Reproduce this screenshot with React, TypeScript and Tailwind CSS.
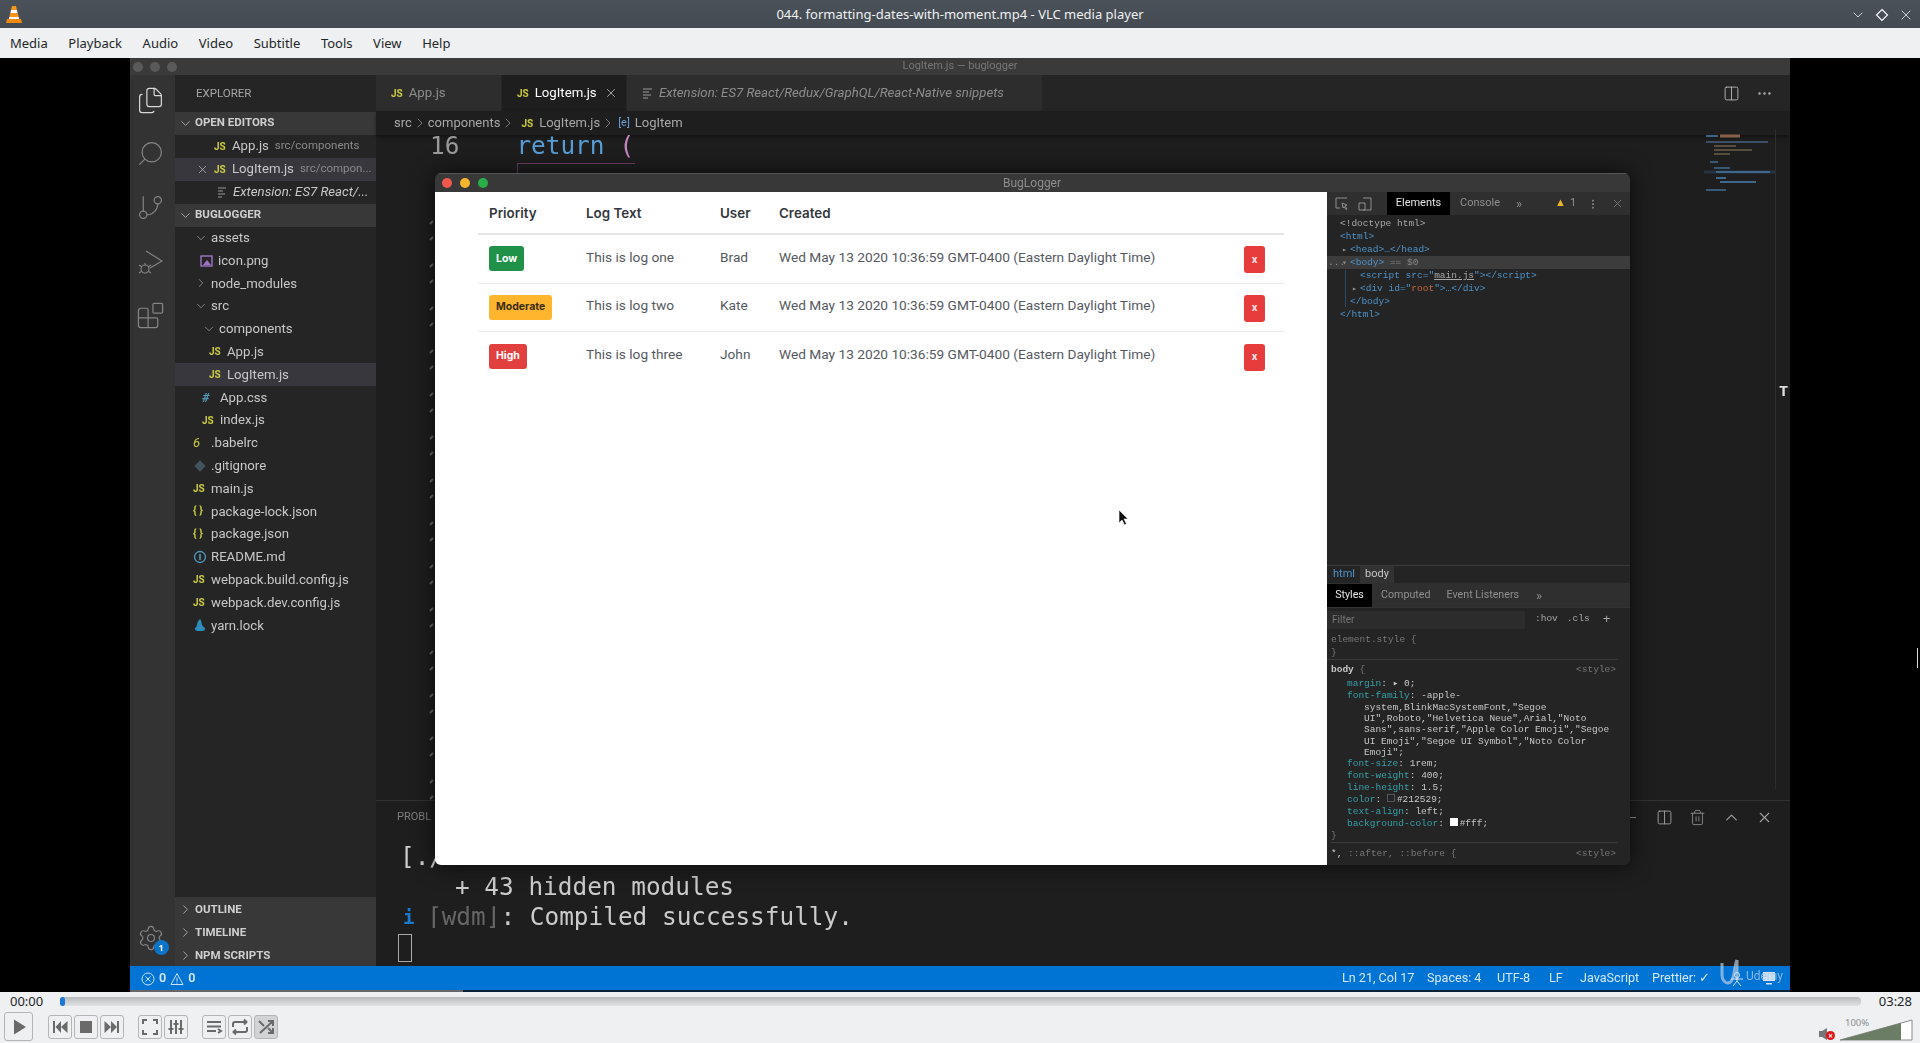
import React from 'react';
import { Blocks, ChevronDown, ChevronRight, ChevronUp, Columns2, Files, GitBranch, MoreHorizontal, Search, Settings, Trash2, X } from 'lucide-react';

const uiFont = "font-['Noto_Sans',sans-serif]";
const videoFont = "font-['Roboto',sans-serif]";
const headFont = "font-['Inter',sans-serif]";
const monoFont = "font-['DejaVu_Sans_Mono',monospace]";
const devMono = "font-['Liberation_Mono',monospace]";

type FileIcon = 'js' | 'css' | 'png' | 'babel' | 'git' | 'json' | 'info' | 'yarn' | 'folder-open' | 'folder';

interface TreeRow {
  name: string;
  icon: FileIcon;
  pad: string;
  selected?: boolean;
}

const treeRows: TreeRow[] = [
  { name: 'assets', icon: 'folder-open', pad: 'pl-[18px]' },
  { name: 'icon.png', icon: 'png', pad: 'pl-[25px]' },
  { name: 'node_modules', icon: 'folder', pad: 'pl-[18px]' },
  { name: 'src', icon: 'folder-open', pad: 'pl-[18px]' },
  { name: 'components', icon: 'folder-open', pad: 'pl-[26px]' },
  { name: 'App.js', icon: 'js', pad: 'pl-[34px]' },
  { name: 'LogItem.js', icon: 'js', pad: 'pl-[34px]', selected: true },
  { name: 'App.css', icon: 'css', pad: 'pl-[27px]' },
  { name: 'index.js', icon: 'js', pad: 'pl-[27px]' },
  { name: '.babelrc', icon: 'babel', pad: 'pl-[18px]' },
  { name: '.gitignore', icon: 'git', pad: 'pl-[18px]' },
  { name: 'main.js', icon: 'js', pad: 'pl-[18px]' },
  { name: 'package-lock.json', icon: 'json', pad: 'pl-[18px]' },
  { name: 'package.json', icon: 'json', pad: 'pl-[18px]' },
  { name: 'README.md', icon: 'info', pad: 'pl-[18px]' },
  { name: 'webpack.build.config.js', icon: 'js', pad: 'pl-[18px]' },
  { name: 'webpack.dev.config.js', icon: 'js', pad: 'pl-[18px]' },
  { name: 'yarn.lock', icon: 'yarn', pad: 'pl-[18px]' },
];

const logs = [
  { priority: 'Low', cls: 'bg-[#1f9148] text-white', text: 'This is log one', user: 'Brad' },
  { priority: 'Moderate', cls: 'bg-[#ffb52e] text-[#3a2c08]', text: 'This is log two', user: 'Kate' },
  { priority: 'High', cls: 'bg-[#e23f3f] text-white', text: 'This is log three', user: 'John' },
];

const JsMark = () => <span className="w-[18px] shrink-0 text-[10px] font-bold text-[#cbcb41]">JS</span>;

const RowIcon = ({ icon }: { icon: FileIcon }) => {
  if (icon === 'js') return <JsMark />;
  if (icon === 'css') return <span className="w-[18px] shrink-0 text-[13px] font-bold italic text-[#519aba]">#</span>;
  if (icon === 'json') return <span className="w-[18px] shrink-0 text-[11px] font-bold text-[#cbcb41]">{'{ }'}</span>;
  if (icon === 'babel') return <span className="w-[18px] shrink-0 text-[13px] italic text-[#cbcb41]">6</span>;
  if (icon === 'folder-open') return <ChevronDown className="mr-[2px] w-[16px] shrink-0 text-[#aaa]" size={14} strokeWidth={1.2} />;
  if (icon === 'folder') return <ChevronRight className="mr-[2px] w-[16px] shrink-0 text-[#aaa]" size={14} strokeWidth={1.2} />;
  return (
    <svg className="mr-[4px] shrink-0" width="14" height="14" viewBox="0 0 14 14">
      {icon === 'git' && <rect x="3" y="3" width="8" height="8" transform="rotate(45 7 7)" fill="#41535b" />}
      {icon === 'info' && (
        <>
          <circle cx="7" cy="7" r="5.5" fill="none" stroke="#519aba" strokeWidth="1.3" />
          <path d="M7 4v6" stroke="#519aba" strokeWidth="1.6" />
        </>
      )}
      {icon === 'yarn' && <path d="M7 1c2 2 1 4 2 6s3 2 3 4-3 2-5 2-5 0-5-2 2-2 2-4 1-4 3-6z" fill="#2c8ebb" />}
      {icon === 'png' && (
        <>
          <rect x="1" y="2" width="11" height="10" fill="none" stroke="#a074c4" strokeWidth="1.4" />
          <path d="M3 11l4-5 4 5z" fill="#a074c4" />
        </>
      )}
    </svg>
  );
};

const SectionHeader = ({ title, open = true }: { title: string; open?: boolean }) => (
  <div className={`flex h-[23px] items-center bg-[#383838] pl-[3px] text-[11.5px] font-bold text-[#cfcfcf] ${open ? '' : 'pt-[2px]'}`}>
    {open ? <ChevronDown size={15} strokeWidth={1.3} className="mr-[2px] text-[#bbb]" /> : <ChevronRight size={15} strokeWidth={1.3} className="mr-[2px] text-[#bbb]" />}
    {title}
  </div>
);

const Sidebar = () => (
  <aside className={`flex w-[201px] shrink-0 flex-col bg-[#252526] text-[13.2px] text-[#c8c8c8] ${videoFont}`}>
    <div className="flex h-[36.5px] items-center pl-[21px] text-[11.5px] text-[#a5a5a5]">EXPLORER</div>
    <SectionHeader title="OPEN EDITORS" />
    <div className="flex h-[23px] items-center pl-[39px]">
      <JsMark />
      <span>App.js</span>
      <span className="ml-[6px] text-[11.5px] text-[#8a8a8a]">src/components</span>
    </div>
    <div className="flex h-[23px] items-center bg-[#37373d] pl-[21px]">
      <X size={13} strokeWidth={1.3} className="mr-[5px] text-[#c5c5c5]" />
      <JsMark />
      <span>LogItem.js</span>
      <span className="ml-[6px] whitespace-nowrap text-[11.5px] text-[#8a8a8a]">src/compon...</span>
    </div>
    <div className="flex h-[23px] items-center pl-[42px]">
      <svg className="mr-[6px] shrink-0" width="10" height="12" viewBox="0 0 10 12" stroke="#9a9a9a" strokeWidth="1.2">
        <path d="M1 2h8M1 5h5M1 8h7M1 11h4" />
      </svg>
      <span className="whitespace-nowrap italic">Extension: ES7 React/...</span>
    </div>
    <SectionHeader title="BUGLOGGER" />
    {treeRows.map((row) => (
      <div key={row.name} className={`flex h-[22.8px] items-center ${row.pad} ${row.selected ? 'bg-[#37373d]' : ''}`}>
        <RowIcon icon={row.icon} />
        <span>{row.name}</span>
      </div>
    ))}
    <div className="flex-1" />
    <SectionHeader title="OUTLINE" open={false} />
    <SectionHeader title="TIMELINE" open={false} />
    <SectionHeader title="NPM SCRIPTS" open={false} />
  </aside>
);

const ActivityBar = () => (
  <nav className="flex w-[45px] shrink-0 flex-col items-center bg-[#333333] pt-[11px] pr-[4px] text-[#858585]">
    <Files size={29} strokeWidth={1} className="mb-[24px] text-[#d8d8d8]" />
    <Search size={29} strokeWidth={1} className="mb-[25px] scale-x-[-1]" />
    <GitBranch size={29} strokeWidth={1} className="mb-[25px]" />
    <svg className="mb-[24px]" width="30" height="30" viewBox="0 0 30 30" fill="none" stroke="currentColor" strokeWidth="1.1">
      <path d="M10 4l16 10-12 7" />
      <circle cx="9" cy="22" r="4" />
      <path d="M3 18l3 2M3 26l3-2M15 18l-3 2M15 26l-3-2M9 16v2" />
    </svg>
    <Blocks size={29} strokeWidth={1} />
    <div className="flex-1" />
    <div className="relative mb-[14px]">
      <Settings size={28} strokeWidth={1} />
      <span className="absolute right-[-4px] bottom-[-3px] flex h-[15px] w-[15px] items-center justify-center rounded-full bg-[#0a74c8] text-[9px] font-bold text-white">1</span>
    </div>
  </nav>
);

const Tab = ({ label, width, active, italic }: { label: string; width: string; active?: boolean; italic?: boolean }) => (
  <div className={`mr-[1px] flex h-full items-center pl-[15px] ${width} ${active ? 'bg-[#1e1e1e] text-white' : 'bg-[#2d2d2d] text-[#8d8d8d]'}`}>
    {italic ? (
      <svg className="mr-[6px]" width="11" height="12" viewBox="0 0 11 12" stroke="#9a9a9a" strokeWidth="1.2">
        <path d="M1 2h9M1 5h6M1 8h8M1 11h5" />
      </svg>
    ) : (
      <span className="mr-[6px] text-[10px] font-bold text-[#cbcb41]">JS</span>
    )}
    <span className={italic ? 'italic' : ''}>{label}</span>
    {active && <X size={14} strokeWidth={1.3} className="ml-[7px] text-[#ccc]" />}
  </div>
);

const Editor = () => (
  <main className="flex min-w-0 flex-1 flex-col bg-[#1e1e1e]">
    <div className={`flex h-[36px] shrink-0 items-center bg-[#252526] text-[13.2px] ${videoFont}`}>
      <Tab label="App.js" width="w-[125px]" />
      <Tab label="LogItem.js" width="w-[124px]" active />
      <Tab label="Extension: ES7 React/Redux/GraphQL/React-Native snippets" width="w-[415px]" italic />
      <div className="flex-1" />
      <Columns2 size={17} strokeWidth={1.3} className="mr-[16px] text-[#b5b5b5]" />
      <MoreHorizontal size={17} strokeWidth={1.5} className="mr-[17px] text-[#b5b5b5]" />
    </div>
    <div className={`flex h-[24px] shrink-0 items-center pl-[18px] text-[13px] text-[#a8a8a8] shadow-[0_2px_4px_rgba(0,0,0,0.4)] ${videoFont}`}>
      <span>src</span>
      <ChevronRight size={16} strokeWidth={1} />
      <span>components</span>
      <ChevronRight size={16} strokeWidth={1} />
      <span className="mr-[6px] ml-[5px] text-[10px] font-bold text-[#cbcb41]">JS</span>
      <span>LogItem.js</span>
      <ChevronRight size={16} strokeWidth={1} />
      <span className="mx-[2px] text-[11px] text-[#6aa0d8]">[e]</span>
      <span className="ml-[3px]">LogItem</span>
    </div>
    <div className="relative min-h-0 flex-1">
      <div className={`-mt-[4px] flex h-[30px] items-center text-[24.4px] ${monoFont}`}>
        <span className="ml-[54px] text-[#9a9a9a]">16</span>
        <span className="ml-[57px] text-[#569cd6]">return</span>
        <span className="ml-[15px] text-[#c586c0]">(</span>
      </div>
      <div className="absolute top-[28px] left-[141px] h-[10px] w-[118px] border-t border-l border-[#6a3f66]" />
      <svg className="absolute top-[-5px] right-[14px] opacity-75" width="72" height="66" viewBox="0 0 72 66">
        <g strokeWidth="2" fill="none">
          <path d="M2 6h12" stroke="#4a7fb0" />
          <path d="M16 6h20" stroke="#b0785a" strokeWidth="3" />
          <path d="M2 12h62" stroke="#44607e" />
          <path d="M10 16h22M10 20h38M10 24h16" stroke="#6b6048" />
          <path d="M6 32h8M10 38h16" stroke="#3e6d96" />
          <path d="M0 42h72" stroke="#2a3a4e" strokeWidth="3" />
          <path d="M12 42h54M12 48h10M16 52h36" stroke="#4a7fb0" />
          <path d="M2 60h20" stroke="#3e6d96" />
        </g>
      </svg>
      <div className="absolute top-[-6px] right-[14px] h-[660px] w-px bg-[#2d2d2d]" />
      <span className="absolute top-[244px] right-[2px] text-[15px] font-bold text-[#ddd]">T</span>
    </div>
    <section className="h-[166px] shrink-0 border-t border-[#333] bg-[#1e1e1e]">
      <div className="flex h-[32px] items-center pl-[21px] pr-[17px] text-[#a0a0a0]">
        <span className={`text-[11px] text-[#7f7f7f] ${videoFont}`}>PROBL</span>
        <div className="flex-1" />
        <span className="mr-[20px] h-px w-[7px] bg-[#999]" />
        <Columns2 size={17} strokeWidth={1.3} className="mr-[16px]" />
        <Trash2 size={17} strokeWidth={1.3} className="mr-[16px] text-[#888]" />
        <ChevronUp size={19} strokeWidth={1.5} className="mr-[15px]" />
        <X size={17} strokeWidth={1.5} />
      </div>
      <div className={`relative pt-[9px] pl-[24px] text-[24.4px] leading-[30px] text-[#ccc] ${monoFont}`}>
        <div>[./</div>
        <div className="pl-[55px]">+ 43 hidden modules</div>
        <div className="flex items-center">
          <span className="w-[27px] pl-[3px] text-[19px] font-bold text-[#1a7ad0]">i</span>
          <span className="text-[#666]">⌈wdm⌋</span>
          <span>: Compiled successfully.</span>
        </div>
      </div>
      <div className="mt-[2px] ml-[22px] h-[28px] w-[14px] border border-[#aaa]" />
    </section>
  </main>
);

const StatusBar = () => (
  <footer className={`relative flex h-[24px] shrink-0 items-center bg-[#0074d4] pt-[1px] pl-[11px] text-[12.6px] text-[#d4e8fa] ${videoFont}`}>
    <svg width="14" height="14" viewBox="0 0 14 14" fill="none" stroke="#cfe3f7" strokeWidth="1">
      <circle cx="7" cy="7" r="6" />
      <path d="M4.500 4.500l5 5M9.500 4.500l-5 5" />
    </svg>
    <span className="mx-[4px] font-semibold">0</span>
    <svg width="14" height="14" viewBox="0 0 14 14" fill="none" stroke="#cfe3f7" strokeWidth="1">
      <path d="M7 1.500L13 12.500H1zM7 5.500v4M7 10.500v1" />
    </svg>
    <span className="ml-[4px] font-semibold">0</span>
    <div className="flex-1" />
    <span className="w-[85px]">Ln 21, Col 17</span>
    <span className="w-[70px]">Spaces: 4</span>
    <span className="w-[52px]">UTF-8</span>
    <span className="w-[31px]">LF</span>
    <span className="w-[72px]">JavaScript</span>
    <span className="w-[138px]">Prettier: ✓</span>
    <svg className="absolute top-[-9px] right-[45px] opacity-70" width="26" height="32" viewBox="0 0 26 32" fill="none" stroke="#b9cfe6" strokeWidth="3">
      <path d="M3 6v12c0 5 3 8 6 8s5-4 6-10 2-11 3-13M18 3v20" />
    </svg>
    <svg className="absolute top-[5px] right-[46px]" width="14" height="16" viewBox="0 0 14 16" fill="none" stroke="#cfe3f7" strokeWidth="1">
      <circle cx="7" cy="4" r="2.500" />
      <path d="M1 8h12M7 7v3l-4 5M7 10l4 5" />
    </svg>
    <svg className="absolute top-[5px] right-[14px]" width="14" height="14" viewBox="0 0 14 14" fill="#cfe3f7">
      <path d="M1 1h12v9H1zM4 12h6v1.500H4z" />
    </svg>
    <span className="absolute top-[1px] right-[7px] text-[12px] text-[#a9c8e8] opacity-80">Udemy</span>
  </footer>
);

const Badge = ({ label, cls }: { label: string; cls: string }) => (
  <span className={`inline-flex h-[25px] items-center rounded-[3px] px-[7px] text-[10.5px] font-bold ${headFont} ${cls}`}>{label}</span>
);

const LogTable = () => (
  <div className={`min-w-0 flex-1 bg-white pl-[43px] pr-[43px] text-[13.7px] text-[#55595e] ${videoFont}`}>
    <div className={`flex h-[43px] items-center border-b-2 border-[#e3e6e9] pt-[2px] pl-[11px] text-[13.4px] font-semibold text-[#33373b] ${headFont}`}>
      <span className="w-[97px]">Priority</span>
      <span className="w-[134px]">Log Text</span>
      <span className="w-[59px]">User</span>
      <span>Created</span>
    </div>
    {logs.map((log) => (
      <div key={log.user} className="flex h-[48.5px] items-center border-b border-[#e8eaec] pl-[11px] last:border-b-0">
        <span className="flex w-[97px]">
          <Badge label={log.priority} cls={log.cls} />
        </span>
        <span className="w-[134px] pb-[3px]">{log.text}</span>
        <span className="w-[59px] pb-[3px]">{log.user}</span>
        <span className="w-[465px] whitespace-nowrap pb-[3px]">Wed May 13 2020 10:36:59 GMT-0400 (Eastern Daylight Time)</span>
        <span className="mt-[2px] flex h-[27px] w-[21px] items-center justify-center rounded-[3px] bg-[#e63c3c] text-[11px] font-bold text-[#fbe1e1]">x</span>
      </div>
    ))}
  </div>
);

const DomLine = ({ children, selected, pad, arrow }: { children: React.ReactNode; selected?: boolean; pad: string; arrow?: string }) => (
  <div className={`h-[13px] whitespace-nowrap leading-[13px] ${pad} ${selected ? 'bg-[#3c3c3c]' : ''}`}>
    {arrow && <span className="-ml-[8px] inline-block w-[8px] text-[8px] text-[#8f8f8f]">{arrow}</span>}
    {children}
  </div>
);

const Prop = ({ name, value }: { name: string; value: React.ReactNode }) => (
  <div className="h-[12px] whitespace-nowrap pl-[16px] leading-[12px] text-[#c8c8c8]">
    <span className="text-[#35a0a8]">{name}</span>: {value}
  </div>
);

const DevTools = () => (
  <div className={`flex w-[303px] shrink-0 flex-col bg-[#242424] text-[9.5px] text-[#bcbcbc] ${devMono}`}>
    <div className={`flex h-[23px] shrink-0 items-center bg-[#2f2f2f] text-[11px] text-[#8f8f8f] ${videoFont}`}>
      <svg className="ml-[8px]" width="13" height="13" viewBox="0 0 13 13" fill="none" stroke="#8f8f8f">
        <path d="M12 1H1v10h4M7 6l5 2-2 1 2 3-1 .6-2-3-1 1.400z" />
      </svg>
      <svg className="ml-[10px]" width="14" height="14" viewBox="0 0 14 14" fill="none" stroke="#8f8f8f">
        <path d="M5 1h8v12H5M1 6h6v7H1z" />
      </svg>
      <span className="ml-[15px] flex h-full w-[63px] items-center justify-center bg-black text-[#e4e4e4]">Elements</span>
      <span className="ml-[10px] w-[38px]">Console</span>
      <span className="ml-[18px] text-[13px]">»</span>
      <span className="ml-[33px] text-[#f0b429]">▲</span>
      <span className="ml-[4px]">1</span>
      <MoreHorizontal size={12} className="ml-[11px] rotate-90" />
      <X size={13} strokeWidth={1.3} className="ml-[12px]" />
    </div>
    <div className="relative h-[350px] shrink-0 pt-[2px] text-[#4d93c9]">
      <DomLine pad="pl-[13px]"><span className="text-[#a9a9a9]">&lt;!doctype html&gt;</span></DomLine>
      <DomLine pad="pl-[13px]">&lt;html&gt;</DomLine>
      <DomLine pad="pl-[23px]" arrow="▸">&lt;head&gt;…&lt;/head&gt;</DomLine>
      <DomLine pad="pl-[23px]" selected arrow="▾">&lt;body&gt; <span className="text-[#8a8a8a]">== $0</span></DomLine>
      <DomLine pad="pl-[33px]">&lt;script src="<span className="text-[#a9a9a9] underline">main.js</span>"&gt;&lt;/script&gt;</DomLine>
      <DomLine pad="pl-[33px]" arrow="▸">&lt;div id="<span className="text-[#c7693c]">root</span>"&gt;…&lt;/div&gt;</DomLine>
      <DomLine pad="pl-[23px]">&lt;/body&gt;</DomLine>
      <DomLine pad="pl-[13px]">&lt;/html&gt;</DomLine>
      <span className="absolute top-[41px] left-[1px] text-[#8f8f8f]">...</span>
      <span className="absolute top-[55px] left-[18px] h-[37px] w-px bg-[#264a6e]" />
    </div>
    <div className={`flex h-[18px] shrink-0 items-center border-t border-[#3a3a3a] text-[11px] ${videoFont}`}>
      <span className="ml-[6px] text-[#4d93c9]">html</span>
      <span className="ml-[5px] flex h-full items-center bg-[#323232] px-[5px] text-[#c8c8c8]">body</span>
    </div>
    <div className={`flex h-[25px] shrink-0 items-center border-b border-[#333] bg-[#2f2f2f] pt-[1px] text-[10.7px] text-[#8f8f8f] ${videoFont}`}>
      <span className="flex h-full w-[45px] items-center justify-center bg-black text-[#e4e4e4]">Styles</span>
      <span className="ml-[9px]">Computed</span>
      <span className="ml-[16px]">Event Listeners</span>
      <span className="ml-[17px] text-[13px]">»</span>
    </div>
    <div className="mr-[12px] flex h-[21px] shrink-0 items-center pt-[2px] text-[#a8a8a8]">
      <span className={`flex h-[18px] w-[198px] items-center bg-[#2c2c2c] pl-[5px] text-[10px] text-[#777] ${videoFont}`}>Filter</span>
      <span className="ml-[10px]">:hov</span>
      <span className="ml-[9px]">.cls</span>
      <span className="ml-[13px] text-[13px]">+</span>
    </div>
    <div className="mr-[12px] h-[31px] shrink-0 border-b border-[#3a3a3a] pt-[4px] pl-[4px] text-[#777] leading-[13px]">
      <div>element.style {'{'}</div>
      <div>{'}'}</div>
    </div>
    <div className="mr-[12px] flex-1 overflow-hidden pt-[3px] pl-[4px]">
      <div className="flex h-[15px] justify-between pr-[2px] leading-[13px]">
        <span className="font-bold text-[#c8c8c8]">body <span className="font-normal text-[#777]">{'{'}</span></span>
        <span className="text-[#777]">&lt;style&gt;</span>
      </div>
      <Prop name="margin" value="▸ 0;" />
      <Prop name="font-family" value="-apple-" />
      <div className="pl-[33px] leading-[11.2px] whitespace-nowrap text-[#c8c8c8]">
        <div>system,BlinkMacSystemFont,"Segoe</div>
        <div>UI",Roboto,"Helvetica Neue",Arial,"Noto</div>
        <div>Sans",sans-serif,"Apple Color Emoji","Segoe</div>
        <div>UI Emoji","Segoe UI Symbol","Noto Color</div>
        <div>Emoji";</div>
      </div>
      <Prop name="font-size" value="1rem;" />
      <Prop name="font-weight" value="400;" />
      <Prop name="line-height" value="1.5;" />
      <Prop
        name="color"
        value={
          <>
            <span className="mr-[2px] inline-block h-[8px] w-[8px] border border-[#555] bg-[#212529]" />
            #212529;
          </>
        }
      />
      <Prop name="text-align" value="left;" />
      <Prop
        name="background-color"
        value={
          <>
            <span className="mr-[2px] inline-block h-[8px] w-[8px] bg-white" />
            #fff;
          </>
        }
      />
      <div className="h-[11px] border-b border-[#3a3a3a] pb-[12px] leading-[12px] text-[#777]">{'}'}</div>
      <div className="mt-[4px] flex justify-between pr-[2px] leading-[13px] text-[#777]">
        <span><span className="text-[#c8c8c8]">*,</span> ::after, ::before {'{'}</span>
        <span>&lt;style&gt;</span>
      </div>
    </div>
  </div>
);

const AppWindow = () => (
  <div className="absolute top-[115px] left-[305px] flex h-[692px] w-[1195px] flex-col overflow-hidden rounded-[6px] shadow-[0_0_22px_rgba(0,0,0,0.7)]">
    <div className={`relative flex h-[19px] shrink-0 items-center gap-[8px] border-t border-[#555] bg-[#383838] pl-[7px] ${videoFont}`}>
      <span className="h-[10px] w-[10px] rounded-full bg-[#f0584c]" />
      <span className="h-[10px] w-[10px] rounded-full bg-[#f6b52f]" />
      <span className="h-[10px] w-[10px] rounded-full bg-[#28ae48]" />
      <span className="absolute left-[568px] text-[12px] text-[#8d8d8d]">BugLogger</span>
    </div>
    <div className="flex min-h-0 flex-1">
      <LogTable />
      <DevTools />
    </div>
  </div>
);

const IndentDots = () => (
  <svg className="absolute top-[160px] left-[298px]" width="7" height="600" viewBox="0 0 7 600" stroke="#6a6a6a" strokeWidth="2">
    {Array.from({ length: 14 }, (_, i) => (
      <path key={i} d={`M2 ${i * 43 + 6}l3-3M2 ${i * 43 + 22}l3-3`} />
    ))}
  </svg>
);

const VideoFrame = () => (
  <div className="flex h-[934px] w-[1660px] flex-col overflow-hidden blur-[0.7px]">
    <div className={`relative flex h-[17px] shrink-0 items-center justify-center bg-[#3a3a3a] text-[11px] text-[#777] ${videoFont}`}>
      <div className="absolute left-[3px] flex gap-[7px]">
        <span className="h-[10px] w-[10px] rounded-full bg-[#5a5a5a]" />
        <span className="h-[10px] w-[10px] rounded-full bg-[#5a5a5a]" />
        <span className="h-[10px] w-[10px] rounded-full bg-[#5a5a5a]" />
      </div>
      LogItem.js — buglogger
    </div>
    <div className="relative flex min-h-0 flex-1">
      <ActivityBar />
      <Sidebar />
      <Editor />
    </div>
    <StatusBar />
    <div className="flex h-[2px] shrink-0">
      <div className="w-[333px] bg-[#666]" />
      <div className="flex-1 bg-[#0a2238]" />
    </div>
  </div>
);

const Btn = ({ children, active, cls }: { children: React.ReactNode; active?: boolean; cls?: string }) => (
  <div className={`flex h-[24px] w-[24px] items-center justify-center rounded-[3px] border border-[#b4b5b6] ${active ? 'bg-[#d2d3d4]' : ''} ${cls ?? ''}`}>
    {children}
  </div>
);

const Ctl = ({ d, filled }: { d: string; filled?: boolean }) => (
  <svg width="18" height="18" viewBox="0 0 18 18" fill={filled ? '#6a6a6a' : 'none'} stroke={filled ? 'none' : '#6a6a6a'} strokeWidth="2">
    <path d={d} />
  </svg>
);

const Controls = () => (
  <div className={`flex h-[51px] shrink-0 flex-col bg-[#eff0f1] ${uiFont}`}>
    <div className="flex h-[19px] items-center text-[13px] text-[#232629]">
      <span className="ml-[10px] w-[50px]">00:00</span>
      <div className="h-[9px] flex-1 rounded-[4px] bg-gradient-to-b from-[#b9babb] to-[#e2e3e4]">
        <div className="h-[9px] w-[5px] rounded-[3px] bg-[#1e78d8]" />
      </div>
      <span className="ml-[18px] mr-[8px]">03:28</span>
    </div>
    <div className="flex flex-1 items-center pb-[1px]">
      <div className="ml-[4px] flex h-[29px] w-[29px] items-center justify-center rounded-[3px] border border-[#b4b5b6]">
        <Ctl filled d="M4 1.500L16 9 4 16.500z" />
      </div>
      <div className="ml-[15px] flex gap-[2px]">
        <Btn><Ctl filled d="M2 3h2v12H2zM10 3v12L4.500 9zM16.500 3v12L10 9z" /></Btn>
        <Btn><Ctl filled d="M3 3h12v12H3z" /></Btn>
        <Btn><Ctl filled d="M14 3h2v12h-2zM8 3v12l6-6zM1.500 3v12L8 9z" /></Btn>
      </div>
      <div className="ml-[14px] flex gap-[2px]">
        <Btn><Ctl d="M2 6V2h4M12 2h4v4M16 12v4h-4M6 16H2v-4" /></Btn>
        <Btn><Ctl d="M4 2v14M9 2v14M14 2v14M1.500 11h5M6.500 6h5M11.500 11h5" /></Btn>
      </div>
      <div className="ml-[14px] flex gap-[2px]">
        <Btn><Ctl d="M2 4h14M2 8.500h14M2 13h9M13 11l3 2-3 2" /></Btn>
        <Btn><Ctl d="M2 9V6a2 2 0 0 1 2-2h11M13 1.500L15.500 4 13 6.500M16 9v3a2 2 0 0 1-2 2H3M5 11.500L2.500 14 5 16.500" /></Btn>
        <Btn active><Ctl d="M2 3l5 5M11 3h5v5M16 3L3 15M11 15h5v-5M16 15l-5-5" /></Btn>
      </div>
      <div className="flex-1" />
      <div className="relative mr-[8px] mb-[1px] h-[14px] w-[14px] self-end">
        <svg width="14" height="14" viewBox="0 0 14 14">
          <path d="M1 4h3l5-3v12l-5-3H1z" fill="#777" />
        </svg>
        <span className="absolute right-[-3px] bottom-[1px] flex h-[9px] w-[9px] items-center justify-center rounded-full bg-[#e0161b] text-[8px] leading-none font-bold text-white">×</span>
      </div>
      <div className="relative mr-[7px] mb-[1px] h-[22px] w-[73px] self-end">
        <svg width="73" height="22" viewBox="0 0 73 22">
          <path d="M0 21L72 1v20z" fill="#fff" stroke="#8a8a8a" />
          <path d="M0 21L61 4v17z" fill="#6b7d64" />
        </svg>
        <span className="absolute top-[-3px] left-[5px] text-[9.5px] text-[#8d8f91]">100%</span>
      </div>
    </div>
  </div>
);

export default function App() {
  return (
    <div className="flex h-[1043px] w-[1920px] flex-col overflow-hidden bg-black">
      <header className={`relative flex h-[28px] shrink-0 items-center justify-center bg-gradient-to-b from-[#4a5159] to-[#444b53] pt-[1px] text-[13px] text-[#eff0f1] ${uiFont}`}>
        <svg className="absolute top-[5px] left-[6px]" width="16" height="18" viewBox="0 0 16 18">
          <path d="M6 1h4l1 4H5zM4.300 8h7.400l1 4H3.300z" fill="#f7941d" />
          <path d="M5 5h6l.7 3H4.300zM3.300 12h9.400l.5 2H2.800z" fill="#fff" />
          <path d="M1 14h14l1 4H0z" fill="#f08a12" />
        </svg>
        044. formatting-dates-with-moment.mp4 - VLC media player
        <div className="absolute right-[6px] flex items-center gap-[8px] text-white">
          <ChevronDown size={16} strokeWidth={1.1} />
          <svg width="16" height="16" viewBox="0 0 16 16" fill="none" stroke="currentColor" strokeWidth="1.1">
            <path d="M8 2.500L13.500 8 8 13.500 2.500 8z" />
          </svg>
          <X size={16} strokeWidth={1.1} />
        </div>
      </header>
      <div className={`flex h-[30px] shrink-0 items-center gap-[20.6px] bg-[#eff0f1] pt-[1px] pl-[10px] text-[13px] text-[#232629] ${uiFont}`}>
        {['Media', 'Playback', 'Audio', 'Video', 'Subtitle', 'Tools', 'View', 'Help'].map((item) => (
          <span key={item}>{item}</span>
        ))}
      </div>
      <div className="relative flex min-h-0 flex-1 justify-center">
        <VideoFrame />
        <div className="absolute inset-0 mx-auto w-[1660px] blur-[0.7px]">
          <IndentDots />
          <AppWindow />
          <svg className="absolute top-[451px] left-[988px]" width="11" height="17" viewBox="0 0 11 17">
            <path d="M1 1v13l3-3 2.500 5 2-1-2.500-5h4z" fill="#111" stroke="#fff" strokeWidth="0.6" />
          </svg>
        </div>
        <span className="absolute top-[590px] right-[0px] h-[20px] w-[3px] border-l border-[#ddd] bg-black" />
      </div>
      <Controls />
    </div>
  );
}
